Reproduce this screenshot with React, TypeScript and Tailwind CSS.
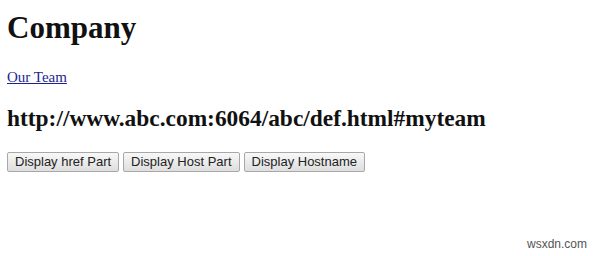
import React from "react";

export default function App() {
  return (
    <div className="relative w-[600px] h-[256px] bg-white overflow-hidden pl-[7px] pt-[10px]" style={{ fontFamily: '"Liberation Serif", serif' }}>
      <h1 className="text-[31px] leading-[36px] font-bold text-[#111]" style={{ fontFamily: '"Liberation Serif", serif' }}>Company</h1>
      <div className="mt-[22px] h-[18px] text-[15px] leading-[18px]">
        <a href="#" className="text-[#1e1e92] underline">Our Team</a>
      </div>
      <h2 className="mt-[19px] text-[23.4px] leading-[27px] font-bold text-[#111]">http://www.abc.com:6064/abc/def.html#myteam</h2>
      <div className="mt-[20px] flex gap-[4px]" style={{ fontFamily: '"Liberation Sans", Arial, sans-serif' }}>
        <button className="h-[20px] px-[7px] text-[13px] leading-[18px] text-[#222] border border-[#a8a8a8] rounded-[2px] bg-gradient-to-b from-[#f8f8f8] to-[#dedede]">Display href Part</button>
        <button className="h-[20px] px-[7px] text-[13px] leading-[18px] text-[#222] border border-[#a8a8a8] rounded-[2px] bg-gradient-to-b from-[#f8f8f8] to-[#dedede]">Display Host Part</button>
        <button className="h-[20px] px-[7px] text-[13px] leading-[18px] text-[#222] border border-[#a8a8a8] rounded-[2px] bg-gradient-to-b from-[#f8f8f8] to-[#dedede]">Display Hostname</button>
      </div>
      <div className="absolute left-[527px] top-[237px] text-[12px] leading-[14px] text-[#555]" style={{ fontFamily: '"Liberation Sans", Arial, sans-serif' }}>wsxdn.com</div>
    </div>
  );
}
